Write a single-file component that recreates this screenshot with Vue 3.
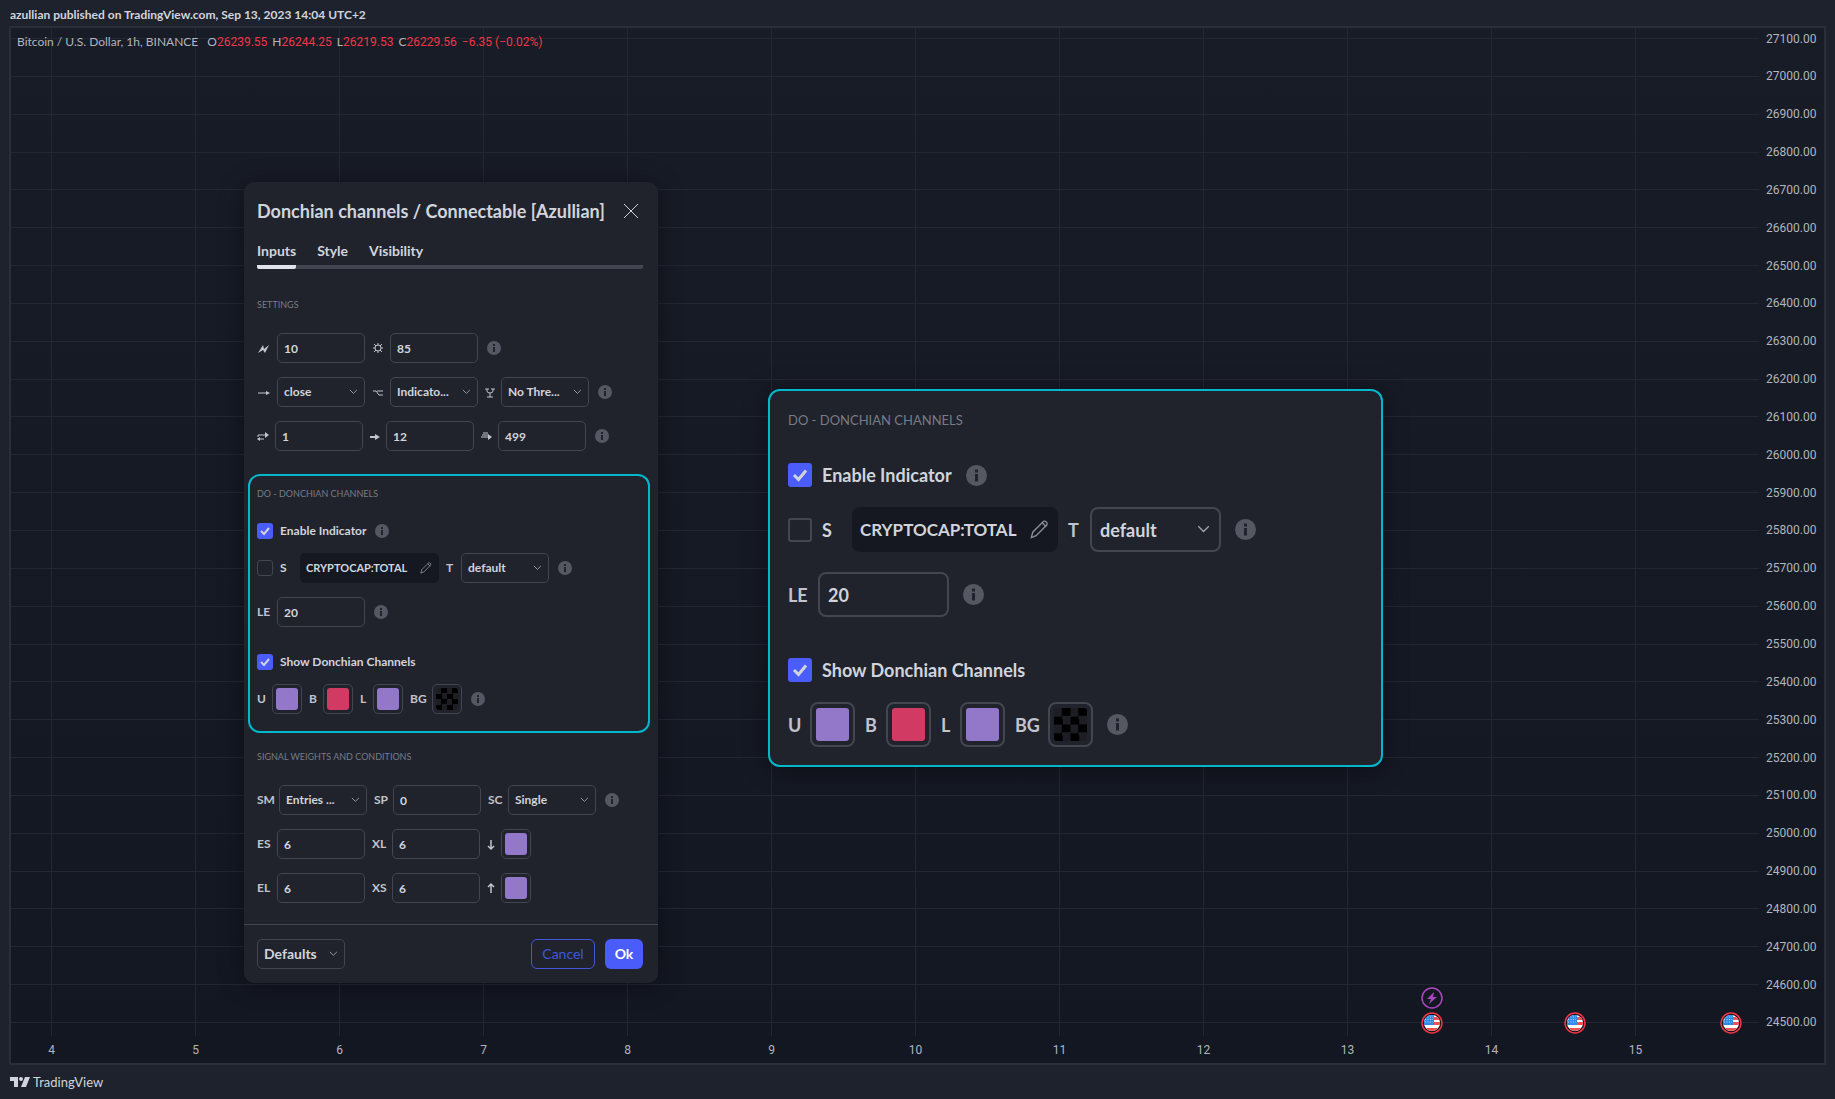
<script setup>
const prices = Array.from({ length: 27 }, (_, i) => (27100 - i * 100).toFixed(2))
const days = Array.from({ length: 12 }, (_, i) => i + 4)
const flags = [81.3, 89.5, 98.4]
const ohlc = [['O', '26239.55'], ['H', '26244.25'], ['L', '26219.53'], ['C', '26229.56']]

const field = (label, value, w) => ({ type: 'input', label, value, w })
const pick = (label, value, w) => ({ type: 'select', label, value, w })
const glyph = (icon, base) => ({ ...base, icon })
const swatch = (label, color, w) => ({ type: 'color', label, color, w })
const info = { type: 'info' }

const settings = {
  title: 'SETTINGS',
  rows: [
    { items: [glyph('bolt', field('Fast', '10', 13)), glyph('sun', field('Bright', '85', 11)), info] },
    { items: [glyph('arrow', pick('Source', 'close', 13)), glyph('option', pick('Mode', 'Indicato...', 11)), glyph('fork', pick('Threshold', 'No Thre...', 9)), info] },
    { items: [glyph('swap', field('From', '1', 11)), glyph('short', field('To', '12', 9)), glyph('stack', field('Limit', '499', 10)), info] }
  ]
}
const donchian = {
  title: 'DO - DONCHIAN CHANNELS',
  framed: true,
  rows: [
    { items: [{ type: 'check', label: 'Enable Indicator', on: true }, info] },
    { items: [{ type: 'check', label: 'S', on: false, wide: true }, { type: 'symbol', value: 'CRYPTOCAP:TOTAL' }, pick('T', 'default', 8), info] },
    { items: [field('LE', '20', 13), info] },
    { spaced: true, items: [{ type: 'check', label: 'Show Donchian Channels', on: true }] },
    { items: [swatch('U', 'violet', 8), swatch('B', 'rose', 7), swatch('L', 'violet', 6), swatch('BG', 'checker', 15), info] }
  ]
}
const signals = {
  title: 'SIGNAL WEIGHTS AND CONDITIONS',
  rows: [
    { items: [pick('SM', 'Entries ...', 15), field('SP', '0', 12), pick('SC', 'Single', 13), info] },
    { items: [field('ES', '6', 13), field('XL', '6', 13), glyph('down', swatch('Down', 'violet', 7))] },
    { items: [field('EL', '6', 13), field('XS', '6', 13), glyph('up', swatch('Up', 'violet', 7))] }
  ]
}
const windows = [
  { kind: 'dialog', scale: 1, groups: [settings, donchian, signals] },
  { kind: 'magnified', scale: 1.5, groups: [donchian] }
]

const icons = {
  bolt: '<path d="M0 12 5 4l1 4 5-4-4 8-2-3z" fill="currentColor" stroke="none"/>',
  sun: '<circle cx="6" cy="7" r="3"/><path d="M6 2v2M6 10v2M1 7h2M9 7h2M2 3l2 2M10 3 8 5M2 11l2-2M10 11 8 9"/>',
  arrow: '<path d="M0 8h10"/><path d="M8 6l4 2-4 2z" fill="currentColor" stroke="none"/>',
  option: '<path d="M1 6h3l3 4h4M5 6h6"/>',
  fork: '<path d="M1 4h4M7 4h4M3 4v2q0 2 3 2t3-2V4M6 8v4M3 12h6"/>',
  swap: '<path d="M1 6h8M1 10h6M1 6v2"/><path d="M8 3l4 3-4 3zM3 8v4L0 10z" fill="currentColor" stroke="none"/>',
  short: '<path d="M1 8h7" stroke-width="2"/><path d="M6 5l5 3-5 3z" fill="currentColor" stroke="none"/>',
  stack: '<path d="M3 4h5M2 6h6M1 8h8"/><path d="M8 5l4 3-4 3z" fill="currentColor" stroke="none"/>',
  down: '<path d="M6 3v9M3 9l3 3 3-3" stroke-width="1.5"/>',
  up: '<path d="M6 12V3M3 6l3-3 3 3" stroke-width="1.5"/>'
}
const tabs = ['Inputs', 'Style', 'Visibility']
</script>

<template>
  <div class="page">
    <header class="published">azullian published on TradingView.com, Sep 13, 2023 14:04 UTC+2</header>

    <main class="chart">
      <div class="plot">
        <div class="h-lines"><i v-for="p in prices" :key="p"></i></div>
        <div class="v-lines"><i v-for="d in days" :key="d"></i></div>
        <p class="legend">
          <span class="market">Bitcoin / U.S. Dollar, 1h, BINANCE</span>
          <span v-for="[k, v] in ohlc" :key="k">{{ k }}<b>{{ v }}</b></span>
          <b>−6.35 (−0.02%)</b>
        </p>
        <svg class="event flash" viewBox="0 0 22 22"><circle cx="11" cy="11" r="10" /><path d="M13 5 6 12h4l-2 5 8-7h-4z" /></svg>
        <svg v-for="f in flags" :key="f" class="event flag" viewBox="0 0 22 22" :style="{ left: f + '%' }">
          <clipPath id="disc"><circle cx="11" cy="11" r="8" /></clipPath>
          <circle cx="11" cy="11" r="10" fill="#131722" stroke="#f23645" stroke-width="1.5" />
          <g clip-path="url(#disc)">
            <path fill="#fff" d="M3 3h16v16H3z" />
            <path fill="#ef5350" d="M3 5h16v3H3zM3 10h16v3H3zM3 16h16v3H3z" />
            <path fill="#2f8ae5" d="M3 3h10v10H3z" />
            <path stroke="#bbdefb" stroke-dasharray="1 1.5" d="M4 5h8M4 7.500h8M4 10h8" />
          </g>
        </svg>
      </div>
      <div class="price-axis"><span v-for="p in prices" :key="p">{{ p }}</span></div>
      <div class="time-axis"><span v-for="d in days" :key="d">{{ d }}</span></div>
    </main>

    <footer class="brand">
      <svg viewBox="0 0 20 10" width="20" height="10"><path d="M0 0h8v10H4V4H0z" /><circle cx="11" cy="2" r="2" /><path d="M15 0h5l-4 10h-5z" /></svg>
      <span>TradingView</span>
    </footer>

    <section v-for="w in windows" :key="w.kind" class="window" :class="w.kind">
      <template v-if="w.kind === 'dialog'">
        <div class="title-bar">
          <h1>Donchian channels / Connectable [Azullian]</h1>
          <button class="close" aria-label="Close"><svg viewBox="0 0 14 14"><path d="M0 0l14 14M14 0 0 14" /></svg></button>
        </div>
        <nav class="tabs">
          <button v-for="(t, i) in tabs" :key="t" :class="{ active: i === 0 }">{{ t }}</button>
        </nav>
      </template>

      <div v-for="g in w.groups" :key="g.title" class="group" :class="{ framed: g.framed }">
        <h2>{{ g.title }}</h2>
        <div v-for="(r, ri) in g.rows" :key="ri" class="row" :class="{ spaced: r.spaced }">
          <template v-for="(it, ii) in r.items" :key="ii">
            <svg v-if="it.type === 'info'" class="info" viewBox="0 0 14 14"><circle cx="7" cy="7" r="7" /><path d="M6 3h2v2H6zM6 6h2v5H6z" /></svg>

            <label v-else-if="it.type === 'check'" class="check" :class="{ wide: it.wide }">
              <input type="checkbox" :checked="it.on" />
              <svg v-if="it.on" class="tick" viewBox="0 0 16 16"><path d="M4 8l3 3 5-6" /></svg>
              <span>{{ it.label }}</span>
            </label>

            <button v-else-if="it.type === 'symbol'" class="symbol">
              <span>{{ it.value }}</span>
              <svg viewBox="0 0 14 14"><path d="M1 13l1-4 8-8q1-.5 2 .5t.5 2l-8 8zM9 2l3 3" /></svg>
            </button>

            <label v-else class="control">
              <span class="name" :class="{ iconic: it.icon }" :style="{ width: Math.round(it.w * w.scale) + 'px' }">
                <svg v-if="it.icon" class="glyph" viewBox="0 0 12 14" :aria-label="it.label" v-html="icons[it.icon]"></svg>
                <template v-else>{{ it.label }}</template>
              </span>
              <input v-if="it.type === 'input'" class="box" type="text" :value="it.value" />
              <span v-else-if="it.type === 'select'" class="drop">
                <select class="box"><option>{{ it.value }}</option></select>
                <svg class="chevron" viewBox="0 0 10 6"><path d="M1 1l4 4 4-4" /></svg>
              </span>
              <button v-else class="swatch"><i :class="it.color"></i></button>
            </label>
          </template>
        </div>
      </div>

      <div v-if="w.kind === 'dialog'" class="actions">
        <span class="drop">
          <select class="box" aria-label="Defaults"><option>Defaults</option></select>
          <svg class="chevron" viewBox="0 0 10 6"><path d="M1 1l4 4 4-4" /></svg>
        </span>
        <button class="cancel">Cancel</button>
        <button class="ok">Ok</button>
      </div>
    </section>
  </div>
</template>

<style>
body { margin: 0; background: #1e222d; }
</style>

<style scoped>
* { box-sizing: border-box; }
.page {
  position: relative;
  display: flex;
  flex-direction: column;
  min-height: 100vh;
  padding: 0 9px;
  color: #d1d4dc;
  background: #1e222d;
  font: 12px/16px "Trebuchet MS", Lato, sans-serif;
}
button, input, select { margin: 0; padding: 0; border: 0; background: none; color: inherit; font: inherit; }
svg { fill: none; stroke: currentColor; overflow: visible; flex: none; }
h1, h2, p { margin: 0; }
b { font-weight: 400; }

.published { height: 26px; padding: 7px 1px 0; font-weight: 700; }
.chart {
  flex: 1;
  display: grid;
  grid-template: 1fr 27px / 1fr 65px;
  border: 2px solid #2a2e39;
  background: linear-gradient(#181c27, #131722);
}
.plot { position: relative; }
.h-lines, .v-lines { position: absolute; inset: 0; display: flex; justify-content: space-between; }
.h-lines { flex-direction: column; padding: 10px 0 13px; }
.v-lines { padding: 0 123px 0 40px; }
.h-lines i { height: 1px; background: #232733; }
.v-lines i { width: 1px; background: #232733; }
.legend { position: relative; display: flex; gap: 5px; padding: 6px 0 0 6px; color: #b2b5be; }
.legend b { color: #f23645; font-family: Roboto, sans-serif; }
.market { margin-right: 4px; }
.price-axis { display: flex; flex-direction: column; justify-content: space-between; padding: 10px 0 13px 7px; color: #b2b5be; font-family: Roboto, sans-serif; }
.price-axis span { display: flex; align-items: center; height: 1px; }
.time-axis { display: flex; justify-content: space-between; align-items: center; padding: 0 123px 0 40px; color: #b2b5be; font-family: Roboto, sans-serif; }
.time-axis span { display: flex; justify-content: center; width: 1px; }
.event { position: absolute; width: 22px; height: 22px; bottom: 2px; margin-left: -11px; }
.flash { left: 81.3%; bottom: 27px; stroke: #ab47bc; stroke-width: 1.5; }
.flash path { fill: #ab47bc; stroke: none; }
.flag g { stroke: none; }
.brand { display: flex; align-items: center; gap: 3px; height: 34px; padding-left: 1px; font-size: 13px; }
.brand svg { fill: #d1d4dc; stroke: none; }

.window { position: absolute; background: #20232c; font-weight: 700; box-shadow: 0 2px 24px rgba(0, 0, 0, .4); }
.dialog {
  --h: 30px; --w: 88px; --gap: 7px; --row: 14px; --extra: 13px; --tick: 16px; --info: 14px; --info-gap: 2px;
  --line: 1px; --pad: 6px; --sym: 139px; --sym-text: 11px; --lead: 43px; --head: 21px; --title: 14px; --small: 9px; --radius: 5px; --inset: 4px;
  left: 244px; top: 182px; width: 414px; padding: 14px 15px 0 13px; border-radius: 10px;
  font-size: 12px;
}
.magnified {
  --h: 45px; --w: 131px; --gap: 10px; --row: 20px; --extra: 21px; --tick: 24px; --info: 21px; --info-gap: 4px;
  --line: 2px; --pad: 8px; --sym: 206px; --sym-text: 17px; --lead: 64px; --head: 33px; --title: 20px; --small: 13px; --radius: 8px; --inset: 5px;
  left: 768px; top: 389px; width: 615px; border-radius: 12px;
  font-size: 18px;
  line-height: 24px;
}
.title-bar { display: flex; align-items: center; justify-content: space-between; height: 30px; padding-right: 5px; }
h1 { font-size: 18px; font-weight: 700; white-space: nowrap; }
.close { display: flex; }
.close svg { width: 14px; height: 14px; }
.tabs { display: flex; gap: 21px; height: 43px; padding-top: 15px; margin-bottom: 29px; border-bottom: 4px solid #434651; border-radius: 2px; font-size: 14px; }
.tabs button { height: 28px; font-weight: 700; padding-bottom: 4px; border-bottom: 4px solid transparent; }
.tabs .active { border-color: #e0e3eb; border-radius: 2px; }

.group { display: flex; flex-direction: column; gap: var(--row); }
.group h2 { height: var(--title); margin-bottom: calc(var(--head) - var(--row)); color: #787b86; font-size: var(--small); line-height: var(--title); font-weight: 400; }
.framed { border: 2px solid #00b8cc; border-radius: 12px; }
.dialog .framed { --head: 22px; margin: 23px -7px 17px -9px; padding: 11px 7px 17px; }
.magnified .framed { padding: 19px 18px 18px; }
.row { display: flex; align-items: center; gap: var(--gap); }
.spaced { margin-top: var(--extra); }
.control, .check { display: flex; align-items: center; gap: var(--gap); }
.check { position: relative; }
.check.wide { width: calc(var(--lead) - var(--gap)); }
.check input { appearance: none; width: var(--tick); height: var(--tick); border: var(--line) solid #434651; border-radius: 3px; }
.check input:checked { border: 0; background: #4a5dfa; }
.tick { position: absolute; left: 0; width: var(--tick); height: var(--tick); stroke-width: 2; }
.name { display: flex; align-items: center; white-space: nowrap; color: #c1c4cd; }
.iconic { justify-content: center; }
.glyph { width: 12px; height: 14px; }
.box { width: var(--w); height: var(--h); padding: 0 var(--pad); border: var(--line) solid #434651; border-radius: var(--radius); appearance: none; }
.drop { position: relative; display: flex; }
.chevron { position: absolute; right: 8%; top: 40%; width: 10%; stroke: #a3a6af; pointer-events: none; }
.info { width: var(--info); height: var(--info); margin-left: var(--info-gap); fill: #555862; stroke: none; }
.info path { fill: #20232c; }
.symbol { display: flex; align-items: center; justify-content: space-between; width: var(--sym); height: var(--h); padding: 0 var(--pad); border-radius: var(--radius); background: #151821; font-size: var(--sym-text); }
.symbol svg { width: var(--info); height: var(--info); padding: 1px; stroke: #8b8e98; }
.swatch { width: var(--h); height: var(--h); padding: calc(var(--inset) - 1px); border: var(--line) solid #434651; border-radius: var(--radius); }
.swatch i { display: block; height: 100%; border-radius: 3px; }
.violet { background: #9378ca; }
.rose { background: #d03a63; }
.checker { background: conic-gradient(#000 25%, #1d1d24 0 50%, #000 0 75%, #1d1d24 0) 0 0 / 50% 50%; }

.actions { display: flex; align-items: center; gap: 10px; height: 59px; margin: 21px -15px 0 -13px; padding: 0 15px 0 13px; border-top: 1px solid #434651; font-size: 14px; }
.actions .drop { margin-right: auto; }
.actions button { height: 30px; border-radius: 6px; }
.cancel { width: 64px; border: 1px solid #4356dc; color: #4356dc; font-weight: 400; }
.ok { width: 38px; background: #4a5dfa; color: #fff; font-weight: 700; }
</style>
